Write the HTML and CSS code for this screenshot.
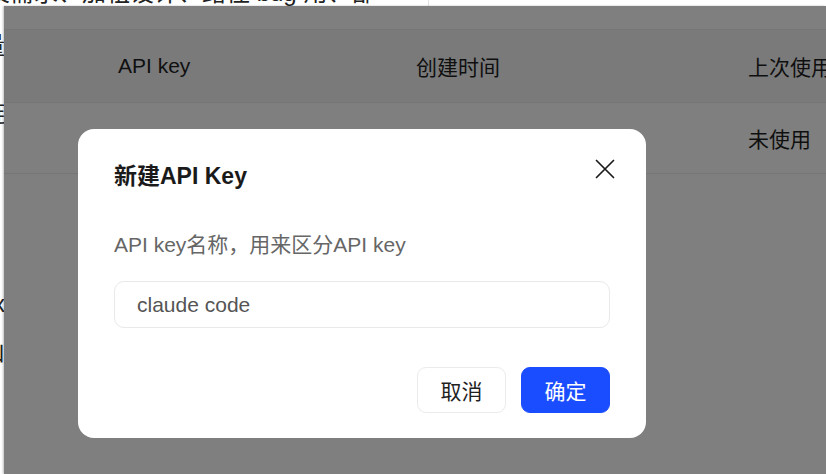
FILE: index.html
```html
<!DOCTYPE html>
<html lang="zh-CN">
<head>
<meta charset="utf-8">
<title>新建API Key</title>
<link rel="stylesheet" href="styles.css">
</head>
<body>
<div class="stage">
  <div class="outer-page">
    <div class="outer-top">及需求、加粗设计、路径 bug 用、部<span class="outer-divider"></span></div>
    <div class="outer-side">
      <span class="side-char c1">量</span>
      <span class="side-char c2">链</span>
      <span class="side-char c3">x</span>
      <span class="side-char c4">山</span>
    </div>
  </div>

  <div class="window">
    <div class="table">
      <div class="row head">
        <div class="cell"></div>
        <div class="cell">API key</div>
        <div class="cell">创建时间</div>
        <div class="cell">上次使用</div>
      </div>
      <div class="row body">
        <div class="cell"></div>
        <div class="cell"></div>
        <div class="cell"></div>
        <div class="cell">未使用</div>
      </div>
    </div>

    <div class="mask"></div>

    <div class="modal">
      <div class="modal-header">
        <div class="modal-title">新建API Key</div>
        <button class="close" aria-label="关闭">
          <svg width="24" height="24" viewBox="0 0 24 24"><path d="M3.5 3.5 L20.5 20.5 M20.5 3.5 L3.5 20.5" stroke="#1a1a1a" stroke-width="1.7" fill="none" stroke-linecap="round"/></svg>
        </button>
      </div>
      <div class="modal-label">API key名称，用来区分API key</div>
      <input class="modal-input" type="text" value="claude code">
      <div class="modal-footer">
        <button class="btn btn-cancel">取消</button>
        <button class="btn btn-ok">确定</button>
      </div>
    </div>
  </div>
</div>
</body>
</html>
```

FILE: styles.css
```css
* { box-sizing: border-box; }

html, body {
  margin: 0;
  padding: 0;
  background: #ffffff;
}

body {
  font-family: "Liberation Sans", "Noto Sans CJK SC", sans-serif;
  color: #1f1f1f;
}

.stage {
  position: relative;
  width: 826px;
  height: 474px;
  overflow: hidden;
  background: #ffffff;
}

/* page behind the window */
.outer-page {
  display: flex;
  flex-direction: column;
}

.outer-top {
  display: flex;
  align-items: flex-start;
  margin-top: -20px;
  margin-left: -14px;
  font-size: 24px;
  line-height: 26px;
  white-space: nowrap;
  color: #222;
}

.outer-divider {
  display: block;
  width: 1px;
  height: 40px;
  background: #e2e2e2;
  margin-left: 53px;
}

.outer-side {
  display: flex;
  flex-direction: column;
  align-items: flex-end;
  width: 24px;
  margin-left: -19px;
  font-size: 24px;
  line-height: 24px;
  color: #222;
}

.side-char { display: block; }
.c1 { margin-top: 14px; }
.c2 { margin-top: 44px; }
.c3 { margin-top: 166px; }
.c4 { margin-top: 24px; }

/* the window over the page */
.window {
  position: absolute;
  left: 4px;
  top: 6px;
  right: 0;
  bottom: 0;
  background: #ffffff;
  box-shadow: -1px 0 2px rgba(0, 0, 0, 0.25);
  overflow: hidden;
}

.table {
  margin-top: 23px;
  border-top: 1px solid #ececec;
}

.row {
  display: grid;
  grid-template-columns: 114px 298px 332px 1fr;
  align-items: center;
  font-size: 21px;
  color: #1f1f1f;
  border-bottom: 1px solid #ececec;
  white-space: nowrap;
}

.row.head {
  height: 73px;
  background: #f4f5f7;
}

.row.body {
  height: 71px;
}

.mask {
  position: absolute;
  inset: 0;
  background: rgba(0, 0, 0, 0.5);
}

.modal {
  position: absolute;
  left: 74px;
  top: 123px;
  width: 568px;
  padding: 28px 36px 25px 36px;
  background: #ffffff;
  border-radius: 16px;
  display: flex;
  flex-direction: column;
}

.modal-header {
  display: flex;
  justify-content: space-between;
  align-items: flex-start;
}

.modal-title {
  margin-top: 3px;
  font-size: 23px;
  line-height: 32px;
  font-weight: 700;
  color: #1a1a1a;
}

.close {
  width: 24px;
  height: 24px;
  padding: 0;
  margin-right: -7px;
  border: none;
  background: transparent;
  display: flex;
  align-items: center;
  justify-content: center;
}

.modal-label {
  margin-top: 38px;
  font-size: 21px;
  line-height: 30px;
  color: #666666;
}

.modal-input {
  margin-top: 21px;
  width: 100%;
  height: 47px;
  padding: 0 0 0 22px;
  border: 1px solid #e9e9ec;
  border-radius: 10px;
  font-family: "Liberation Sans", "Noto Sans CJK SC", sans-serif;
  font-size: 21px;
  color: #555555;
  background: #ffffff;
  outline: none;
}

.modal-footer {
  margin-top: 39px;
  display: flex;
  justify-content: flex-end;
  gap: 15px;
}

.btn {
  width: 89px;
  height: 46px;
  border-radius: 9px;
  font-family: "Liberation Sans", "Noto Sans CJK SC", sans-serif;
  font-size: 21px;
  padding: 0;
}

.btn-cancel {
  background: #ffffff;
  border: 1px solid #ebebee;
  color: #1f1f1f;
}

.btn-ok {
  background: #1a4dff;
  border: 1px solid #1a4dff;
  color: #ffffff;
}
```
